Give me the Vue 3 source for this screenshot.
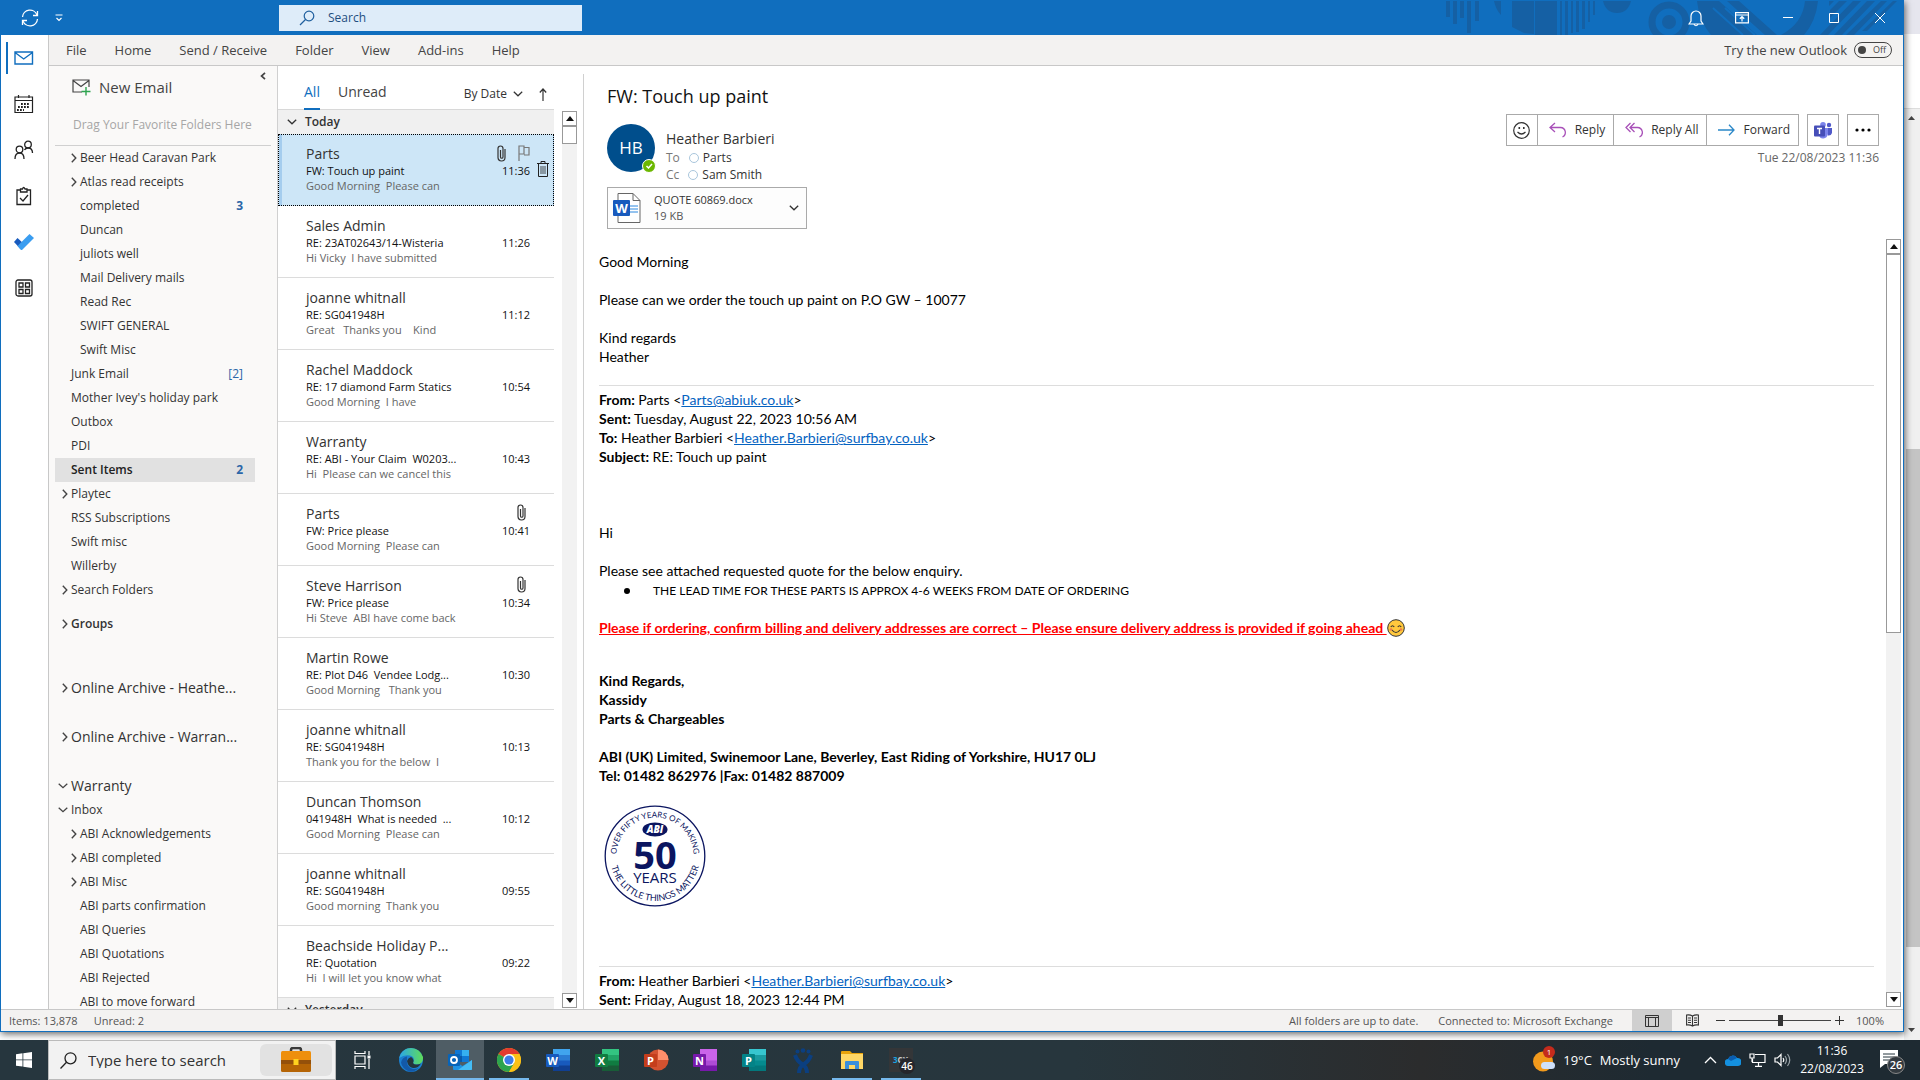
<template>
  <div class="desktop">
    <div class="workspace">
      <div class="window">
        <header class="titlebar">
          <div class="quick">
            <button class="plain" aria-label="Send and receive">
              <svg width="18" height="18" viewBox="0 0 18 18" fill="none" stroke="#fff" stroke-width="1.3">
                <path d="M1.5 8A7.5 7.5 0 0 1 16 6M16.5 10A7.5 7.5 0 0 1 2 12" />
                <path d="M16.5 2v4.5H12M1.5 16v-4.500H6" />
              </svg>
            </button>
            <button class="plain" aria-label="Customise toolbar">
              <svg width="8" height="8" viewBox="0 0 8 8" fill="none" stroke="#fff" stroke-width="1.2"><path d="M.5 1h7M1.500 4 4 6.500 6.500 4" /></svg>
            </button>
          </div>
          <label class="search">
            <svg width="16" height="16" viewBox="0 0 16 16" fill="none" stroke="#1f5f9e" stroke-width="1.2"><circle cx="10" cy="6" r="4.800" /><path d="M6.500 9.500 1 15" /></svg>
            <input type="text" placeholder="Search" aria-label="Search" />
          </label>
          <svg class="art" width="460" height="35" viewBox="0 0 460 35" fill="#1560a4" stroke="#1560a4" stroke-width="0">
            <path d="M5 1h4v16H5zM12 1h4v23h-4zM19 1h4v17h-4zM26 1h4v32h-4zM34 1h4v20h-4z" />
            <path d="M53 1h7v14q-5-5-7-14zM71 1h22v33l-10-1-12-6zM94 1h22v34H94zM114 1h2v34h-2zM119 1h2v34h-2zM124 1h3v34h-3zM130 1h2v32h-2zM135 1h3v31h-3zM141 1h3v28h-3zM147 1h2v21h-2zM152 1h2v14h-2z" />
            <path d="M162 1h28q-3 12-14 12T162 1z" />
            <circle cx="228" cy="22" r="17" fill="none" stroke-width="7" /><circle cx="228" cy="22" r="7" />
            <path d="M256 1h22l38 34h-46q-12-14-14-34zM286 1h12l38 34h-12z" />
            <path d="M272 8l30 27M284 8l30 27" stroke="#106ebe" stroke-width="2" />
            <path d="M364 1h13q-2 20-14 34h-23q22-12 24-34z" />
            <path d="M388 1h5l-5 5zM398 1h8l-17 17v-8zM412 1h8l-33 34h-8zM426 1h8l-33 34h-8zM440 1h6l-33 34h-8zM452 1h4l-30 30h-5z" />
          </svg>
          <div class="winbtns">
            <button class="plain" aria-label="Notifications">
              <svg width="16" height="18" viewBox="0 0 16 18" fill="none" stroke="#fff" stroke-width="1.2"><path d="M3 12V7a5 5 0 0 1 10 0v5l2 3H1zM6 15.500q2 2.500 4 0" /></svg>
            </button>
            <button class="plain" aria-label="Ribbon display options">
              <svg width="14" height="12" viewBox="0 0 14 12" fill="none" stroke="#fff" stroke-width="1.200"><path d="M.6.6h12.800v10.300H.6zM.6 3h12.800M7 9.500V5M4.800 6.800 7 4.700l2.200 2.100" /></svg>
            </button>
            <button class="plain" aria-label="Minimise"><svg width="12" height="12" viewBox="0 0 12 12" stroke="#fff"><path d="M1 5.500h10" /></svg></button>
            <button class="plain" aria-label="Maximise"><svg width="12" height="12" viewBox="0 0 12 12" fill="none" stroke="#fff"><path d="M1.500 1.500h9v9h-9z" /></svg></button>
            <button class="plain" aria-label="Close"><svg width="12" height="12" viewBox="0 0 12 12" stroke="#fff"><path d="m1 1 10 10M11 1 1 11" /></svg></button>
          </div>
        </header>

        <div class="main">
          <nav class="rail" aria-label="Apps">
            <button class="plain active" aria-label="Mail">
              <svg width="20" height="20" viewBox="0 0 20 20" fill="none" stroke="#106ebe" stroke-width="1.400"><path d="M1 4h17.500v12H1zM1 4.500l8.700 6.500 8.800-6.500" /></svg>
            </button>
            <button class="plain" aria-label="Calendar">
              <svg width="20" height="20" viewBox="0 0 20 20" fill="none" stroke="#222" stroke-width="1.200"><path d="M1 3h17.500v15.500H1zM1 6.500h17.500M4.500 1v3M15 1v3" /><path d="M7 10h9M4 13h12M3 16h7" stroke-width="1.800" stroke-dasharray="1.800 1.200" /></svg>
            </button>
            <button class="plain" aria-label="People">
              <svg width="20" height="20" viewBox="0 0 20 20" fill="none" stroke="#222" stroke-width="1.300"><circle cx="5.500" cy="9.500" r="3.300" /><path d="M1 19q0-6 4.500-6t4.500 6" /><circle cx="14" cy="4.500" r="3.300" /><path d="M10.500 10q1-2 3.500-2 4.500 0 4.500 5" /></svg>
            </button>
            <button class="plain" aria-label="Tasks">
              <svg width="20" height="20" viewBox="0 0 20 20" fill="none" stroke="#222" stroke-width="1.300"><path d="M6.500 4H3v14.500h13.500V4H13M6.500 6V3h2q1-3 2.500 0h2v3zM6 12l3 3 5-6" /></svg>
            </button>
            <button class="plain" aria-label="To Do">
              <svg width="20" height="18" viewBox="0 0 20 18"><path d="m0 9 3.500-4L10 11l-3.500 5z" fill="#185abd" /><path d="M6.500 16.500 3.500 13 15.500 1 20 5 8.500 16.500q-1 1-2 0z" fill="#3a9df0" /></svg>
            </button>
            <button class="plain" aria-label="More apps">
              <svg width="18" height="18" viewBox="0 0 18 18" fill="none" stroke="#222" stroke-width="1.300"><rect x="1" y="1" width="16" height="16" rx="2" /><path d="M4 4h4v4H4zM10.500 4h4v4h-4zM4 10.500h4v4H4zM10.500 10.500h4v4h-4z" /></svg>
            </button>
          </nav>

          <div class="content">
            <div class="ribbon">
              <button v-for="tab in tabs" :key="tab" class="plain">{{ tab }}</button>
              <label class="try">Try the new Outlook
                <span class="toggle"><input type="checkbox" /><i></i>Off</span>
              </label>
            </div>

            <div class="panes">
              <aside class="folders">
                <button class="plain new-email">
                  <svg width="19" height="17" viewBox="0 0 19 17" fill="none" stroke="#444" stroke-width="1.200"><path d="M10 13H1V1h16v7M1 1.500l8 6 8-6" /><path d="M14 8v8.500M9.500 12.500h9" stroke="#2ea44f" stroke-width="1.400" /></svg>
                  New Email
                </button>
                <button class="plain collapse" aria-label="Collapse folder pane">
                  <svg width="6" height="8" viewBox="0 0 6 8" fill="none" stroke="#444" stroke-width="1.700"><path d="M5 .8 1.500 4 5 7.200" /></svg>
                </button>
                <p class="drag">Drag Your Favorite Folders Here</p>
                <ul>
                  <li v-for="(f, i) in folders" :key="i" :class="['lvl' + f.level, f.kind, { selected: f.selected }]">
                    <span class="arrow">
                      <svg v-if="f.open" width="10" height="6" viewBox="0 0 10 6" fill="none" stroke="#444" stroke-width="1.300"><path d="m.7.7 4.300 4L9.300.7" /></svg>
                      <svg v-else-if="f.closed" width="6" height="10" viewBox="0 0 6 10" fill="none" stroke="#444" stroke-width="1.400"><path d="m.8.8 4 4.200-4 4.200" /></svg>
                    </span>
                    <button class="plain name">{{ f.name }}</button>
                    <span v-if="f.count" :class="['count', { bold: !f.count.startsWith('[') }]">{{ f.count }}</span>
                  </li>
                </ul>
              </aside>

              <section class="list">
                <div class="list-head">
                  <button class="plain tab on">All</button>
                  <button class="plain tab">Unread</button>
                  <button class="plain sort">By Date
                    <svg width="10" height="6" viewBox="0 0 10 6" fill="none" stroke="#333" stroke-width="1.200"><path d="m.8.8 4.200 4L9.200.8" /></svg>
                  </button>
                  <button class="plain" aria-label="Sort order">
                    <svg width="8" height="13" viewBox="0 0 8 13" fill="none" stroke="#333" stroke-width="1.200"><path d="M4 13V1M.8 4.500 4 1l3.200 3.500" /></svg>
                  </button>
                </div>
                <div class="list-body">
                  <div class="rows">
                    <h2 class="group"><svg width="10" height="6" viewBox="0 0 10 6" fill="none" stroke="#333" stroke-width="1.300"><path d="m.8.8 4.200 4L9.200.8" /></svg>Today</h2>
                    <article v-for="(m, i) in messages" :key="i" :class="['mail', { current: i === 0 }]">
                      <div class="from">{{ m.from }}</div>
                      <div class="subject">{{ m.subject }}</div>
                      <time>{{ m.time }}</time>
                      <div class="preview">{{ m.preview }}</div>
                      <div v-if="m.clip" class="marks">
                        <svg width="9" height="17" viewBox="0 0 9 17" fill="none" stroke="#333" stroke-width="1.200"><path d="M8 4v8.500a3.500 3.500 0 0 1-7 0V3.500a2.500 2.500 0 0 1 5 0V12a1 1 0 0 1-2.500 0V5" /></svg>
                        <svg v-if="i === 0" width="12" height="16" viewBox="0 0 12 16" fill="none" stroke="#777" stroke-width="1.200"><path d="M1 16V1h5v8H1M6 2.500h5V10H6" /></svg>
                      </div>
                      <button v-if="i === 0" class="plain bin" aria-label="Delete">
                        <svg width="12" height="16" viewBox="0 0 12 16" fill="none" stroke="#222"><path d="M0 2.500h12M4 2V.5h4V2M1.500 3v12.500h9V3" /><path d="M4 5v8M6 5v8M8 5v8" stroke-width=".8" /></svg>
                      </button>
                    </article>
                    <h2 class="group"><svg width="10" height="6" viewBox="0 0 10 6" fill="none" stroke="#333" stroke-width="1.300"><path d="m.8.8 4.200 4L9.200.8" /></svg>Yesterday</h2>
                  </div>
                  <div class="scroll short">
                    <button aria-label="Scroll up"><svg width="8" height="5"><path d="m0 5 4-5 4 5z" fill="#111" /></svg></button>
                    <div class="thumb"></div>
                    <button aria-label="Scroll down"><svg width="8" height="5"><path d="m0 0 4 5 4-5z" fill="#111" /></svg></button>
                  </div>
                </div>
              </section>

              <section class="reading">
                <div class="reading-head">
                  <div class="who">
                    <h1>FW: Touch up paint</h1>
                    <div class="person">
                      <div class="avatar">HB
                        <svg width="14" height="14" viewBox="0 0 14 14"><circle cx="7" cy="7" r="6.500" fill="#6bb700" stroke="#fff" /><path d="m4.500 7 2 2 3.500-4" fill="none" stroke="#fff" stroke-width="1.500" /></svg>
                      </div>
                      <div>
                        <div class="sender">Heather Barbieri</div>
                        <div class="to"><span>To</span><i></i>Parts</div>
                        <div class="to"><span>Cc</span><i></i>Sam Smith</div>
                      </div>
                    </div>
                    <button class="attachment">
                      <svg width="28" height="32" viewBox="0 0 28 32"><path d="M5 1.500h15l7 7V30.500H5z" fill="#fff" stroke="#666" /><path d="M20 1.500v7h7" fill="none" stroke="#666" /><path d="M17 14h8M17 17h8M17 20h8" stroke="#2b88e0" /><rect y="8" width="17" height="16" rx="1" fill="#185abd" /><text x="8.500" y="21" text-anchor="middle" font-size="13" font-weight="700" fill="#fff">W</text></svg>
                      <span>QUOTE 60869.docx<small>19 KB</small></span>
                      <svg width="10" height="6" viewBox="0 0 10 6" fill="none" stroke="#333" stroke-width="1.300"><path d="m.8.8 4.200 4L9.200.8" /></svg>
                    </button>
                  </div>
                  <div class="actions">
                    <div class="bar">
                      <div class="joined">
                        <button aria-label="React"><svg width="17" height="17" viewBox="0 0 17 17" fill="none" stroke="#333" stroke-width="1.200"><circle cx="8.500" cy="8.500" r="7.800" /><path d="M4.500 10q4 4 8 0" /><path d="M5.500 6h1.600M10 6h1.600" stroke-width="1.800" /></svg></button>
                        <button><svg width="18" height="16" viewBox="0 0 18 16" fill="none" stroke="#a850b8" stroke-width="1.300"><path d="M6 1 1 5.500 6 10M1 5.500h10.500a5 5 0 0 1 2 9.500" /></svg>Reply</button>
                        <button><svg width="18" height="16" viewBox="0 0 18 16" fill="none" stroke="#a850b8" stroke-width="1.300"><path d="M5.500 1 1 5.500 5.500 10M9.500 1 5 5.500 9.500 10M5 5.500h7.500a5 5 0 0 1 2 9.500" /></svg>Reply All</button>
                        <button><svg width="17" height="12" viewBox="0 0 17 12" fill="none" stroke="#2b88c8" stroke-width="1.300"><path d="M0 6h16M11 .8 16 6l-5 5.200" /></svg>Forward</button>
                      </div>
                      <button aria-label="Share to Teams"><svg width="18" height="17" viewBox="0 0 18 17"><circle cx="15" cy="3" r="2.200" fill="#5059c9" /><circle cx="9" cy="2.800" r="2.800" fill="#7b83eb" /><path d="M13 6h5v5q-1 3-4 2.500z" fill="#5059c9" /><path d="M5 6h9v6q-1 4-4.500 4.500T5 13z" fill="#7b83eb" /><rect y="3.500" width="11" height="11" rx="1" fill="#464eb8" /><path d="M3 6.500h5M5.500 6.500V12" stroke="#fff" stroke-width="1.400" /></svg></button>
                      <button aria-label="More actions"><svg width="16" height="4"><circle cx="2" cy="2" r="1.600" /><circle cx="8" cy="2" r="1.600" /><circle cx="14" cy="2" r="1.600" /></svg></button>
                    </div>
                    <time>Tue 22/08/2023 11:36</time>
                  </div>
                </div>

                <div class="reading-body">
                  <div class="letter">
                    <p>Good Morning</p>
                    <br />
                    <p>Please can we order the touch up paint on P.O GW – 10077</p>
                    <br />
                    <p>Kind regards</p>
                    <p>Heather</p>
                    <div class="quoted">
                      <p><b>From:</b> Parts &lt;<a href="#">Parts@abiuk.co.uk</a>&gt;</p>
                      <p><b>Sent:</b> Tuesday, August 22, 2023 10:56 AM</p>
                      <p><b>To:</b> Heather Barbieri &lt;<a href="#">Heather.Barbieri@surfbay.co.uk</a>&gt;</p>
                      <p><b>Subject:</b> RE: Touch up paint</p>
                    </div>
                    <br /><br /><br />
                    <p>Hi</p>
                    <br />
                    <p>Please see attached requested quote for the below enquiry.</p>
                    <ul><li>THE LEAD TIME FOR THESE PARTS IS APPROX 4-6 WEEKS FROM DATE OF ORDERING</li></ul>
                    <p class="urgent">Please if ordering, confirm billing and delivery addresses are correct – Please ensure delivery address is provided if going ahead
                      <svg width="18" height="18" viewBox="0 0 18 18"><circle cx="9" cy="9" r="8.300" fill="#ffc83d" stroke="#333" /><g fill="none" stroke="#333" stroke-width="1.200"><path d="M3.800 8q1.700-2.500 3.400 0M10.800 8q1.700-2.500 3.400 0M5 11q4 5 8 0" /></g><circle cx="4" cy="10.500" r="1.300" fill="#ee7d4b" /><circle cx="14" cy="10.500" r="1.300" fill="#ee7d4b" /></svg>
                    </p>
                    <div class="signature">
                      <p>Kind Regards,</p>
                      <p>Kassidy</p>
                      <p>Parts &amp; Chargeables</p>
                      <br />
                      <p>ABI (UK) Limited, Swinemoor Lane, Beverley, East Riding of Yorkshire, HU17 0LJ</p>
                      <p>Tel: 01482 862976 |Fax: 01482 887009</p>
                      <svg class="seal" width="102" height="102" viewBox="0 0 102 102" fill="#0b1560">
                        <circle cx="51" cy="51" r="49.800" fill="none" stroke="#0b1560" stroke-width="1.300" />
                        <path id="arc-top" d="M12.400 51a38.600 38.600 0 0 1 77.200 0" fill="none" />
                        <path id="arc-bottom" d="M6 51a45 45 0 0 0 90 0" fill="none" />
                        <g class="ring" text-anchor="middle">
                          <text><textPath href="#arc-top" startOffset="50%">OVER FIFTY YEARS OF MAKING</textPath></text>
                          <text class="lower"><textPath href="#arc-bottom" startOffset="50%">THE LITTLE THINGS MATTER</textPath></text>
                        </g>
                        <ellipse cx="51" cy="24.500" rx="12.500" ry="7" />
                        <text x="51" y="28" text-anchor="middle" font-size="10" font-weight="900" font-style="italic" fill="#fff">ABI</text>
                        <text x="51" y="64" text-anchor="middle" font-size="38" font-weight="700">50</text>
                        <text x="51" y="78" text-anchor="middle" font-size="15">YEARS</text>
                      </svg>
                    </div>
                    <div class="quoted second">
                      <p><b>From:</b> Heather Barbieri &lt;<a href="#">Heather.Barbieri@surfbay.co.uk</a>&gt;</p>
                      <p><b>Sent:</b> Friday, August 18, 2023 12:44 PM</p>
                    </div>
                  </div>
                  <div class="scroll long">
                    <button aria-label="Scroll up"><svg width="8" height="5"><path d="m0 5 4-5 4 5z" fill="#111" /></svg></button>
                    <div class="thumb"></div>
                    <button aria-label="Scroll down"><svg width="8" height="5"><path d="m0 0 4 5 4-5z" fill="#111" /></svg></button>
                  </div>
                </div>
              </section>
            </div>
          </div>
        </div>

        <footer class="status">
          <span>Items: 13,878</span>
          <span>Unread: 2</span>
          <span class="right">All folders are up to date.</span>
          <span>Connected to: Microsoft Exchange</span>
          <div class="views">
            <button class="plain on" aria-label="Normal view"><svg width="14" height="12" viewBox="0 0 14 12" fill="none" stroke="#333"><path d="M.5.5h13v11H.5zM.5 2.500h13M3.500 3v8.500M10.500 3v8.500" /></svg></button>
            <button class="plain" aria-label="Reading view"><svg width="13" height="13" viewBox="0 0 13 13" fill="none" stroke="#333" stroke-width="1.100"><path d="M6.500 2v10.500M6.500 2Q4 .5.600 1v10q3.400-.5 5.900 1Q9 10.500 12.400 11V1Q9 .5 6.500 2M2 4h3M2 6.300h3M2 8.500h3M8 4h3M8 6.300h3M8 8.500h3" /></svg></button>
          </div>
          <div class="zoom">
            <button class="plain" aria-label="Zoom out"><svg width="9" height="9" stroke="#333"><path d="M0 4.500h9" /></svg></button>
            <input type="range" min="0" max="200" value="101" aria-label="Zoom" />
            <button class="plain" aria-label="Zoom in"><svg width="9" height="9" stroke="#333"><path d="M0 4.500h9M4.500 0v9" /></svg></button>
          </div>
          <span>100%</span>
        </footer>
      </div>
      <div class="behind">
        <svg width="7" height="4"><path d="m0 4 3.500-4L7 4z" fill="#444" /></svg>
        <div></div>
        <svg width="7" height="4"><path d="m0 0 3.500 4L7 0z" fill="#444" /></svg>
      </div>
    </div>

    <footer class="taskbar">
      <button class="plain start" aria-label="Start"><svg width="16" height="16" viewBox="0 0 16 16" fill="#fff"><path d="M0 2.200 6.500 1.300v6.200H0zM7.300 1.200 16 0v7.500H7.300zM0 8.300h6.500v6.300L0 13.700zM7.300 8.300H16V16l-8.700-1.300z" /></svg></button>
      <label class="find">
        <svg width="17" height="17" viewBox="0 0 17 17" fill="none" stroke="#222" stroke-width="1.300"><circle cx="10.500" cy="6.300" r="5.500" /><path d="M6.500 10.300.5 16.500" /></svg>
        <input type="text" placeholder="Type here to search" aria-label="Type here to search" />
        <span class="pill">
          <svg width="32" height="26" viewBox="0 0 32 26"><path d="M11 5V3q0-2 2-2h6q2 0 2 2v2" fill="none" stroke="#3a3a3a" stroke-width="2.500" /><rect x="1" y="4" width="30" height="11" rx="1.500" fill="#ee8f0c" /><path d="M1 14h30v9.500q0 1.500-1.500 1.500h-27Q1 25 1 23.500z" fill="#b56405" /><path d="M1 13h30v4H1z" fill="#94500a" /><rect x="13.500" y="12" width="5" height="6" fill="#ffd21f" /></svg>
        </span>
      </label>
      <div class="apps">
        <button v-for="app in apps" :key="app.name" :class="['plain', app.state]" :aria-label="app.name">
          <svg v-if="app.kind === 'view'" width="17" height="18" viewBox="0 0 17 18" fill="none" stroke="#fff" stroke-width="1.200"><path d="M1 5h10v8H1zM1 0v2.500h10V0M1 18v-2.500h10V18M15 0v4M15 8v10" /><path d="M13.500 4.500h3v3h-3z" fill="#fff" stroke="none" /></svg>
          <svg v-else-if="app.kind === 'edge'" width="24" height="24" viewBox="0 0 24 24">
            <defs><linearGradient id="edge-top"><stop offset="0" stop-color="#2aa7e8" /><stop offset="1" stop-color="#5fdc5a" /></linearGradient></defs>
            <circle cx="12" cy="12" r="12" fill="#1b7fd0" /><path d="M.2 10C2 3 7 0 12 0q9 .5 12 9 .5 8-7 7.500-4-.5-2.500-3Q16 9 11 7.500 5 6.500.2 10z" fill="url(#edge-top)" /><path d="M8 13q1-3 4-4 3 2 2.500 4.500-1.500 2.500 2.500 3 3 .3 5-1-3 5-8 4.500-5-1-6-7z" fill="#25343c" /><path d="M8 12q-1 7 6 9 3 .5 6-1.500-4 5-10 4-7-3-8-9 1-5 6-6z" fill="#1359a8" />
          </svg>
          <svg v-else-if="app.kind === 'outlook'" width="24" height="22" viewBox="0 0 24 22"><path d="M7 1h14v12H7z" fill="#0f78d4" /><path d="M14 1h7v6h-7z" fill="#35b0f0" /><path d="M7 7h7v6H7z" fill="#0a5aa8" /><path d="m5 11 9.500 6 9.500-6v9q0 1-1 1H6q-1 0-1-1z" fill="#1f93e4" /><path d="M24 11v9q0 1-1 1H10z" fill="#45bdf5" /><rect y="5" width="12" height="12" rx="1" fill="#0864b8" /><circle cx="6" cy="11" r="3" fill="none" stroke="#fff" stroke-width="1.800" /></svg>
          <svg v-else-if="app.kind === 'chrome'" width="24" height="24" viewBox="0 0 24 24"><circle cx="12" cy="12" r="12" fill="#fbc116" /><path d="M12 12 1.600 6A12 12 0 0 1 22.400 6z" fill="#e33b2e" /><path d="M12 12 1.600 6A12 12 0 0 0 12 24l5.500-9z" fill="#2da44e" /><path d="M12 6h10.400q1.600 3 1.600 6a12 12 0 0 1-12 12l5.200-9z" fill="#fbc116" /><circle cx="12" cy="12" r="6" fill="#fff" /><circle cx="12" cy="12" r="4.600" fill="#3c7de8" /></svg>
          <svg v-else-if="app.kind === 'office'" width="25" height="22" viewBox="0 0 25 22">
            <circle v-if="app.round" cx="14" cy="11" r="10.500" :fill="app.colors[1]" />
            <path v-if="app.round" d="M14 .5A10.500 10.500 0 0 1 24.500 11H14z" :fill="app.colors[0]" />
            <g v-else><path d="M7 0h17v22H7z" :fill="app.colors[1]" /><path d="M7 0h17v6H7z" :fill="app.colors[0]" /><path d="M7 11.500h17V17H7z" :fill="app.colors[2]" /><path d="M7 16.500h17V22H7z" :fill="app.colors[3]" /></g>
            <rect y="5" width="13" height="13" rx="1" :fill="app.colors[4]" /><text x="6.500" y="15.500" text-anchor="middle" font-size="11" font-weight="700" fill="#fff">{{ app.letter }}</text>
          </svg>
          <svg v-else-if="app.kind === 'jira'" width="20" height="25" viewBox="0 0 20 25" fill="none" stroke="#0b3f80" stroke-width="4"><path d="M2 7q2 6 7 9t5 9M18 7q-2 6-7 9t-5 9" /><g fill="#0b3f80" stroke="none"><circle cx="4.500" cy="3.500" r="2" /><circle cx="10" cy="2.500" r="2.300" /><circle cx="15.500" cy="3.500" r="2" /></g></svg>
          <svg v-else-if="app.kind === 'files'" width="22" height="19" viewBox="0 0 22 19"><path d="M0 1q0-1 1-1h8l2 2h11v4H0z" fill="#e8a30c" /><path d="M0 3h22v15H0z" fill="#ffd766" /><path d="M4 18v-7q0-1 1-1h12q1 0 1 1v7h-4v-4H8v4z" fill="#3a8fdc" /></svg>
          <svg v-else width="30" height="30" viewBox="0 0 30 30"><path d="M3 3h24v24H3z" fill="#343638" /><text x="7" y="18" font-size="8" font-weight="700" fill="#1aa3e0">3<tspan fill="#ccc">CX</tspan></text><circle cx="21" cy="21" r="8" fill="#25262c" /><text x="21" y="25" text-anchor="middle" font-size="10" font-weight="600" fill="#fff">46</text></svg>
        </button>
      </div>
      <div class="tray">
        <button class="plain weather">
          <svg width="22" height="28" viewBox="0 0 22 28"><circle cx="10" cy="15.500" r="10" fill="#f29a1c" /><rect x="8" y="16" width="14" height="7" rx="3.500" fill="#cfe0fa" /><circle cx="16" cy="6" r="6" fill="#c42b1c" /><text x="16" y="9" text-anchor="middle" font-size="8" fill="#fff">1</text></svg>
          <span>19°C</span><span>Mostly sunny</span>
        </button>
        <button class="plain" aria-label="Hidden icons"><svg width="13" height="8" viewBox="0 0 13 8" fill="none" stroke="#fff" stroke-width="1.300"><path d="m1 7 5.500-5.500L12 7" /></svg></button>
        <button class="plain" aria-label="OneDrive"><svg width="16" height="11" viewBox="0 0 16 11"><path d="M3.500 11A3.500 3.500 0 0 1 3 4a5 5 0 0 1 9-1 4 4 0 0 1 1 8z" fill="#1490df" /><path d="M3 4a5 5 0 0 1 9-1L6 6z" fill="#0a5db0" /></svg></button>
        <button class="plain" aria-label="Network"><svg width="17" height="14" viewBox="0 0 17 14" fill="none" stroke="#fff" stroke-width="1.200"><path d="M6 1.500h10v8H3.500V6M9.500 9.500V13M6 13.300h7M1 1h4v4H1zM3 5v4" /></svg></button>
        <button class="plain" aria-label="Volume"><svg width="17" height="14" viewBox="0 0 17 14" fill="none" stroke="#fff" stroke-width="1.200"><path d="M1 5v4h2.500L7 12.500v-11L3.500 5zM9 5q1.500 2 0 4" /><path d="M11 3q3 4 0 8M13.500 1q4.500 6 0 12" stroke="#9aa3a8" /></svg></button>
        <time>11:36<br />22/08/2023</time>
        <button class="plain" aria-label="Notifications">
          <svg width="30" height="30" viewBox="0 0 30 30"><path d="M4 5h18v14H9l-5 4z" fill="#fff" /><path d="M7 9h12M7 12h12M7 15h8" stroke="#25343c" /><circle cx="20" cy="20" r="8.500" fill="#333a40" stroke="#888" /><text x="20" y="24" text-anchor="middle" font-size="11" font-weight="600" fill="#fff">26</text></svg>
        </button>
      </div>
    </footer>
  </div>
</template>

<script setup>
const tabs = ['File', 'Home', 'Send / Receive', 'Folder', 'View', 'Add-ins', 'Help']

const folders = [
  { name: 'Beer Head Caravan Park', level: 2, closed: true },
  { name: 'Atlas read receipts', level: 2, closed: true },
  { name: 'completed', level: 2, count: '3' },
  { name: 'Duncan', level: 2 },
  { name: 'juliots well', level: 2 },
  { name: 'Mail Delivery mails', level: 2 },
  { name: 'Read Rec', level: 2 },
  { name: 'SWIFT GENERAL', level: 2 },
  { name: 'Swift Misc', level: 2 },
  { name: 'Junk Email', level: 1, count: '[2]' },
  { name: "Mother Ivey's holiday park", level: 1 },
  { name: 'Outbox', level: 1 },
  { name: 'PDI', level: 1 },
  { name: 'Sent Items', level: 1, count: '2', selected: true },
  { name: 'Playtec', level: 1, closed: true },
  { name: 'RSS Subscriptions', level: 1 },
  { name: 'Swift misc', level: 1 },
  { name: 'Willerby', level: 1 },
  { name: 'Search Folders', level: 1, closed: true },
  { name: 'Groups', level: 1, closed: true, kind: 'groups' },
  { name: 'Online Archive - Heathe...', level: 1, closed: true, kind: 'account' },
  { name: 'Online Archive - Warran...', level: 1, closed: true, kind: 'account' },
  { name: 'Warranty', level: 1, open: true, kind: 'account' },
  { name: 'Inbox', level: 1, open: true },
  { name: 'ABI Acknowledgements', level: 2, closed: true },
  { name: 'ABI completed', level: 2, closed: true },
  { name: 'ABI Misc', level: 2, closed: true },
  { name: 'ABI parts confirmation', level: 2 },
  { name: 'ABI Queries', level: 2 },
  { name: 'ABI Quotations', level: 2 },
  { name: 'ABI Rejected', level: 2 },
  { name: 'ABI to move forward', level: 2 },
]

const messages = [
  { from: 'Parts', subject: 'FW: Touch up paint', preview: 'Good Morning  Please can', time: '11:36', clip: true },
  { from: 'Sales Admin', subject: 'RE: 23AT02643/14-Wisteria', preview: 'Hi Vicky  I have submitted', time: '11:26' },
  { from: 'joanne whitnall', subject: 'RE: SG041948H', preview: 'Great   Thanks you    Kind', time: '11:12' },
  { from: 'Rachel Maddock', subject: 'RE: 17 diamond Farm Statics', preview: 'Good Morning  I have', time: '10:54' },
  { from: 'Warranty', subject: 'RE: ABI - Your Claim  W0203...', preview: 'Hi  Please can we cancel this', time: '10:43' },
  { from: 'Parts', subject: 'FW: Price please', preview: 'Good Morning  Please can', time: '10:41', clip: true },
  { from: 'Steve Harrison', subject: 'FW: Price please', preview: 'Hi Steve  ABI have come back', time: '10:34', clip: true },
  { from: 'Martin Rowe', subject: 'RE: Plot D46  Vendee Lodg...', preview: 'Good Morning   Thank you', time: '10:30' },
  { from: 'joanne whitnall', subject: 'RE: SG041948H', preview: 'Thank you for the below  I', time: '10:13' },
  { from: 'Duncan Thomson', subject: '041948H  What is needed  ...', preview: 'Good Morning  Please can', time: '10:12' },
  { from: 'joanne whitnall', subject: 'RE: SG041948H', preview: 'Good morning  Thank you', time: '09:55' },
  { from: 'Beachside Holiday P...', subject: 'RE: Quotation', preview: 'Hi  I will let you know what', time: '09:22' },
]

// office colors: top, upper, middle, bottom, letter tile
const apps = [
  { name: 'Task View', kind: 'view' },
  { name: 'Edge', kind: 'edge' },
  { name: 'Outlook', kind: 'outlook', state: 'focused' },
  { name: 'Chrome', kind: 'chrome', state: 'running' },
  { name: 'Word', kind: 'office', letter: 'W', colors: ['#41a5ee', '#2b7cd3', '#185abd', '#103f91', '#185abd'] },
  { name: 'Excel', kind: 'office', letter: 'X', colors: ['#33c481', '#21a366', '#107c41', '#185c37', '#107c41'] },
  { name: 'PowerPoint', kind: 'office', letter: 'P', round: true, colors: ['#ff8f6b', '#d35230', '', '', '#c43e1c'] },
  { name: 'OneNote', kind: 'office', letter: 'N', colors: ['#ca64ea', '#ca64ea', '#ae4bd5', '#7719aa', '#7719aa'] },
  { name: 'Publisher', kind: 'office', letter: 'P', colors: ['#37c6d0', '#1a9ba1', '#058b8f', '#03787c', '#038387'] },
  { name: 'Jira', kind: 'jira' },
  { name: 'File Explorer', kind: 'files', state: 'running' },
  { name: '3CX', kind: 'phone', state: 'running' },
]
</script>

<style>
body {
  margin: 0;
}
</style>

<style scoped>
.desktop {
  display: flex;
  flex-direction: column;
  height: 100vh;
  overflow: hidden;
  font: 12px/16px "Open Sans", "Noto Sans", sans-serif;
  color: #333;
  background: #fff;
}

.desktop * {
  box-sizing: border-box;
}

svg {
  display: block;
  flex: none;
}

p, ul, h1, h2 {
  margin: 0;
  padding: 0;
  list-style: none;
}

button, input {
  font: inherit;
  color: inherit;
}

button {
  display: flex;
  align-items: center;
  justify-content: center;
}

.plain {
  padding: 0;
  border: 0;
  background: none;
}

.workspace {
  flex: 1;
  display: flex;
  min-height: 0;
}

.window {
  flex: 1;
  min-width: 0;
  display: flex;
  flex-direction: column;
  margin-bottom: 8px;
  border: 1px solid #106ebe;
  border-top: 0;
  box-shadow: 1px 2px 7px #0009;
  z-index: 1;
}

.behind {
  flex: 0 0 16px;
  display: flex;
  flex-direction: column;
  align-items: flex-end;
  justify-content: space-between;
  padding: 116px 5px 8px 0;
  background: linear-gradient(#e6e6ee 34px, #fff 34px, #fff 108px, #ddd 108px, #ddd 109px, #f0f0f0 109px);
}

.behind div {
  width: 14px;
  height: 498px;
  margin-right: -5px;
  margin-top: 248px;
  background: #c4c4c4;
}

/* title bar */
.titlebar {
  position: relative;
  display: flex;
  align-items: center;
  height: 35px;
  background: #106ebe;
}

.quick {
  display: flex;
  align-items: center;
  gap: 16px;
  width: 278px;
  padding-left: 20px;
}

.search {
  display: flex;
  align-items: center;
  gap: 13px;
  width: 303px;
  height: 26px;
  padding-left: 20px;
  background: #deecf9;
}

.search input, .find input {
  flex: 1;
  min-width: 0;
  padding: 0;
  border: 0;
  background: none;
  outline: 0;
}

.search input::placeholder {
  color: #1f4e80;
  opacity: 1;
}

.art {
  position: absolute;
  right: 2px;
  top: 0;
}

.winbtns {
  position: relative;
  display: flex;
  margin-left: auto;
}

.winbtns button {
  width: 46px;
  height: 34px;
}

/* app rail */
.main {
  flex: 1;
  display: flex;
  min-height: 0;
}

.rail {
  width: 48px;
  padding-top: 7px;
  border-right: 1px solid #c8c8c8;
  background: #fff;
}

.rail button {
  width: 46px;
  height: 32px;
  margin-bottom: 14px;
}

.rail .active {
  background: linear-gradient(#106ebe, #106ebe) 5px 0 / 2px 32px no-repeat;
}

.content {
  flex: 1;
  min-width: 0;
  display: flex;
  flex-direction: column;
}

.ribbon {
  display: flex;
  align-items: center;
  gap: 28px;
  height: 31px;
  padding: 0 11px 0 17px;
  border-bottom: 1px solid #c8c8c8;
  background: #f3f2f1;
  font-size: 13px;
  color: #444;
}

.try {
  display: flex;
  align-items: center;
  gap: 7px;
  margin-left: auto;
}

.toggle {
  display: flex;
  align-items: center;
  justify-content: space-between;
  width: 38px;
  height: 16px;
  padding: 0 5px 0 3px;
  border: 1px solid #444;
  border-radius: 8px;
  font-size: 9px;
}

.toggle input {
  position: absolute;
  opacity: 0;
}

.toggle i {
  width: 8px;
  height: 8px;
  border-radius: 50%;
  background: #444;
}

.panes {
  flex: 1;
  display: flex;
  min-height: 0;
  background: #fff;
}

/* folder pane */
.folders {
  position: relative;
  width: 229px;
  overflow: hidden;
  border-right: 1px solid #d0d0d0;
  background: #faf9f8;
  font-size: 12px;
}

.new-email {
  gap: 8px;
  margin: 9px 0 0 23px;
  height: 24px;
  font-size: 15px;
  color: #444;
}

.collapse {
  position: absolute;
  top: 6px;
  right: 11px;
}

.drag {
  margin: 18px 6px 0;
  padding: 0 18px 12px;
  border-bottom: 1px solid #d0d0d0;
  color: #a6a6a6;
}

.folders ul {
  padding: 0 22px 0 6px;
}

.folders li {
  display: flex;
  align-items: center;
  height: 24px;
  padding-right: 12px;
}

.arrow {
  display: flex;
  justify-content: flex-end;
  flex: none;
  width: 13px;
  margin-right: 3px;
}

.lvl2 .arrow {
  width: 22px;
}

.name {
  white-space: nowrap;
}

.count {
  margin-left: auto;
  color: #2b66a8;
}

.bold {
  font-weight: 700;
}

.selected, .groups {
  font-weight: 600;
}

.selected {
  background: #e1e1e1;
  color: #222;
}

.folders .groups {
  margin-top: 10px;
  margin-bottom: 40px;
}

.folders .account {
  padding-right: 0;
  font-size: 14px;
  margin-bottom: 25px;
}

.folders .account:has(+ li:not(.account)) {
  margin-bottom: 0;
}

/* message list */
.list {
  width: 306px;
  display: flex;
  flex-direction: column;
  margin-top: 8px;
  border-right: 1px solid #d0d0d0;
}

.list-head {
  display: flex;
  align-items: center;
  height: 36px;
  margin-right: 29px;
  padding: 0 7px 0 26px;
  border-bottom: 1px solid #d8d8d8;
}

.tab {
  height: 36px;
  margin-right: 18px;
  padding-top: 2px;
  border-bottom: 2px solid transparent;
  font-size: 14px;
  color: #444;
}

.tab.on {
  border-color: #106ebe;
  color: #106ebe;
}

.sort {
  gap: 6px;
  margin: 0 16px 0 auto;
}

.list-head .tab ~ button:not(.tab) {
  padding-top: 5px;
}

.list-body {
  flex: 1;
  display: flex;
  gap: 8px;
  min-height: 0;
}

.rows {
  width: 276px;
  overflow: hidden;
}

.group {
  display: flex;
  align-items: center;
  gap: 8px;
  height: 24px;
  padding-left: 9px;
  background: #f0f0f0;
  font-size: 12px;
  font-weight: 600;
}

.mail {
  position: relative;
  display: grid;
  grid-template-columns: 1fr auto;
  grid-template-rows: 19px 15px 15px;
  height: 72px;
  padding: 10px 24px 0 28px;
  border-bottom: 1px solid #dcdcdc;
  font-size: 11px;
  white-space: pre;
}

.current {
  border: 1px dotted #000;
  padding: 9px 23px 0 27px;
  background: linear-gradient(90deg, #a5cdee 3px, #cde6f7 3px);
}

.from {
  grid-column: 1 / 3;
  font-size: 14px;
  line-height: 20px;
}

.subject, .mail time {
  color: #111;
}

.preview {
  grid-column: 1 / 3;
  color: #666;
}

.marks {
  position: absolute;
  top: 10px;
  right: 28px;
  display: flex;
  gap: 12px;
}

.current .marks {
  right: 23px;
}

.bin {
  position: absolute;
  top: 26px;
  right: 4px;
}

/* scroll bars */
.scroll {
  flex: none;
  display: flex;
  flex-direction: column;
  background: #f2f2f2;
}

.scroll button {
  width: 15px;
  height: 15px;
  padding: 0;
  border: 1px solid #999;
  background: #fff;
}

.scroll button:last-child {
  margin-top: auto;
}

.thumb {
  border: 1px solid #999;
  background: #fff;
}

.short {
  margin: 1px 0;
}

.short .thumb {
  height: 18px;
}

.long .thumb {
  height: 42%;
  min-height: 379px;
}

/* reading pane */
.reading {
  flex: 1;
  min-width: 0;
  display: flex;
  flex-direction: column;
}

.reading-head {
  display: flex;
  justify-content: space-between;
  padding: 18px 24px 10px 23px;
}

h1 {
  font-size: 18px;
  font-weight: 400;
  line-height: 24px;
  color: #111;
}

.person {
  display: flex;
  gap: 11px;
  height: 63px;
  margin-top: 16px;
}

.avatar {
  position: relative;
  display: flex;
  align-items: center;
  justify-content: center;
  width: 48px;
  height: 48px;
  border-radius: 50%;
  background: #004e8c;
  color: #fff;
  font-size: 17px;
}

.avatar svg {
  position: absolute;
  right: -1px;
  bottom: -1px;
}

.sender {
  margin-top: 5px;
  font-size: 14px;
  line-height: 20px;
}

.to {
  display: flex;
  align-items: center;
  height: 17px;
}

.to span {
  margin-right: 9px;
  color: #777;
}

.to i {
  width: 10px;
  height: 10px;
  margin-right: 4px;
  border: 1px solid #a9c6dc;
  border-radius: 50%;
}

.attachment {
  width: 200px;
  height: 42px;
  padding: 0 7px 0 5px;
  border: 1px solid #aaa;
  background: #fdfdfd;
  text-align: left;
  font-size: 11px;
}

.attachment span {
  flex: 1;
  margin-left: 13px;
}

.attachment small {
  display: block;
  font-size: 11px;
  color: #555;
}

.actions {
  display: flex;
  flex-direction: column;
  align-items: flex-end;
  gap: 4px;
  margin-top: 30px;
  color: #666;
}

.bar, .joined {
  display: flex;
}

.bar {
  gap: 8px;
}

.bar button {
  min-width: 32px;
  height: 32px;
  padding: 0;
  border: 1px solid #aaa;
  background: #fff;
  color: #333;
}

.joined button {
  gap: 8px;
}

.joined button + button {
  margin-left: -1px;
  padding: 0 8px 0 11px;
}

.reading-body {
  flex: 1;
  display: flex;
  min-height: 0;
  padding-bottom: 2px;
}

.letter {
  flex: 1;
  overflow: hidden;
  padding: 13px 12px 0 15px;
  font: 14px/19px Lato, "Open Sans", sans-serif;
  color: #000;
}

.long {
  margin-right: 2px;
}

.letter a {
  color: #0563c1;
}

.quoted {
  margin-top: 19px;
  padding-top: 4px;
  border-top: 1px solid #ddd;
}

.letter ul {
  padding: 1px 0 18px 54px;
  font-size: 12px;
}

.letter li {
  position: relative;
}

.letter li::before {
  content: "";
  position: absolute;
  left: -29px;
  top: 7px;
  width: 6px;
  height: 6px;
  border-radius: 50%;
  background: #000;
}

.urgent {
  color: #f00;
  font-weight: 700;
  text-decoration: underline;
}

.urgent svg {
  display: inline-block;
  vertical-align: -4px;
}

.signature {
  margin-top: 34px;
  font-weight: 700;
}

.seal {
  margin: 20px 0 0 5px;
  font-family: "Open Sans", sans-serif;
  font-weight: 400;
}

.ring {
  font: 8px Lato, sans-serif;
}

.ring .lower {
  font-size: 9px;
}

.second {
  margin-top: 59px;
}

/* status bar */
.status {
  display: flex;
  align-items: center;
  gap: 16px;
  height: 22px;
  padding: 0 19px 0 8px;
  border-top: 1px solid #c8c8c8;
  background: #f3f2f1;
  font-size: 11px;
  color: #555;
}

.status .right {
  margin-left: auto;
  margin-right: 4px;
}

.views {
  display: flex;
  margin-left: 3px;
}

.views button {
  width: 40px;
  height: 21px;
}

.views .on {
  background: #cfcfcf;
}

.zoom {
  display: flex;
  align-items: center;
  gap: 4px;
  margin: 0 -4px 0 -12px;
}

.zoom input {
  appearance: none;
  width: 102px;
  height: 12px;
  margin: 0;
  background: linear-gradient(#444, #444) 0 50% / 100% 1px no-repeat;
}

.zoom input::-webkit-slider-thumb {
  appearance: none;
  width: 5px;
  height: 11px;
  background: #333;
}

/* taskbar */
.taskbar {
  display: flex;
  height: 40px;
  background: linear-gradient(90deg, #26363e, #27363d 56%, #2b2c2d 74%, #1e2a32 86%);
  color: #fff;
  z-index: 2;
}

.start {
  width: 48px;
}

.find {
  display: flex;
  align-items: center;
  gap: 11px;
  width: 288px;
  padding: 0 3px 0 11px;
  border: 1px solid #bbb;
  background: #f2f2f2;
  font-size: 15px;
  color: #333;
}

.find input::placeholder {
  color: #333;
  opacity: 1;
}

.pill {
  display: flex;
  align-items: center;
  justify-content: center;
  width: 72px;
  height: 32px;
  border-radius: 6px;
  background: #e2e2e2;
}

.apps {
  display: flex;
  gap: 1px;
  margin-left: 2px;
}

.apps button {
  width: 48px;
  height: 40px;
}

.apps .running {
  background: linear-gradient(#76b9ed, #76b9ed) 50% 100% / 40px 2px no-repeat;
}

.apps .focused {
  background: #4f5d65;
  border-bottom: 2px solid #76b9ed;
  padding-top: 2px;
}

.tray {
  display: flex;
  align-items: center;
  gap: 8px;
  margin-left: auto;
  padding-right: 14px;
}

.weather {
  gap: 8px;
  margin-right: 16px;
  font-size: 13px;
}

.tray time {
  width: 66px;
  margin-right: 3px;
  text-align: center;
  font-size: 12px;
  line-height: 18px;
}
</style>
